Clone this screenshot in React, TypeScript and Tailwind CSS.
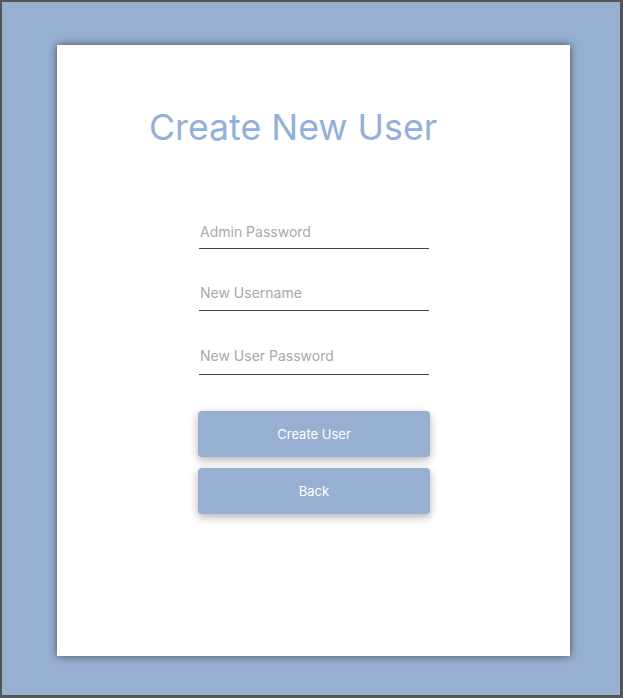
import React from 'react';

const fields = ['Admin Password', 'New Username', 'New User Password'];

const App: React.FC = () => {
  return (
    <div
      className="h-[698px] w-[623px] border-l-2 border-t-2 border-r-[3px] border-b-[3px] border-[#555555] bg-[#97afd0] pl-[55px] pt-[43px]"
      style={{ fontFamily: 'Inter, "Noto Sans", sans-serif' }}
    >
      <div className="h-[611px] w-[513px] bg-white shadow-[0_0_8px_rgba(0,0,0,0.55)]">
        {/* Title */}
        <h1 className="pl-[92px] pt-[58px] text-[35.7px] font-normal leading-[48px] text-[#92b0d9]">
          Create New User
        </h1>

        {/* Inputs */}
        <div className="ml-[142px] mt-[67px] w-[230px]">
          {fields.map((f, i) => (
            <div
              key={f}
              className={`border-b border-[#444444] ${i === 0 ? 'h-[31px]' : i === 1 ? 'mt-[30px] h-[32px]' : 'mt-[31px] h-[33px]'}`}
            >
              <input
                type="text"
                placeholder={f}
                className="w-full bg-transparent px-[1px] pt-[3px] text-[14px] text-[#444] outline-none placeholder:text-[#a9a9a9]"
              />
            </div>
          ))}
        </div>

        {/* Buttons */}
        <div className="ml-[141px] mt-[36px] flex w-[232px] flex-col gap-[11px]">
          <button className="h-[46px] rounded-[4px] bg-[#97afd0] pt-[2px] text-[13px] text-white shadow-[0_3px_8px_rgba(0,0,0,0.3)]">
            Create User
          </button>
          <button className="h-[46px] rounded-[4px] bg-[#97afd0] pt-[2px] text-[13px] text-white shadow-[0_3px_8px_rgba(0,0,0,0.3)]">
            Back
          </button>
        </div>
      </div>
    </div>
  );
};

export default App;
